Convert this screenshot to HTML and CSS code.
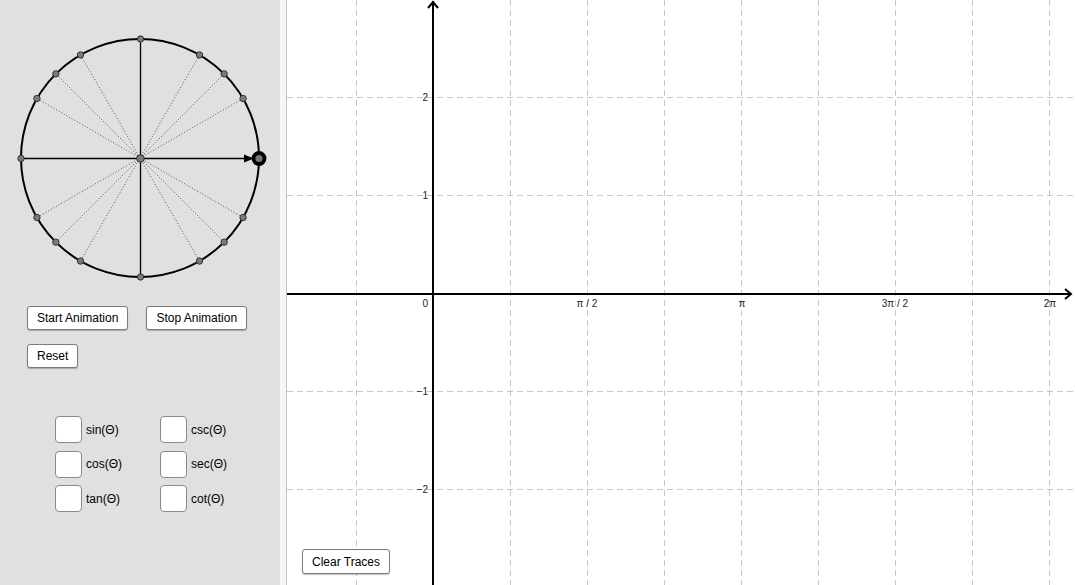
FILE: index.html
```
<!DOCTYPE html>
<html>
<head>
<meta charset="utf-8">
<link rel="stylesheet" href="styles.css">
</head>
<body>
<div class="app">
  <aside class="sidebar">
    <svg class="circle" width="280" height="300" viewBox="0 0 280 300">
      <g class="dots">
        <line x1="140" y1="158" x2="243.06" y2="98.5"/>
        <line x1="140" y1="158" x2="224.15" y2="73.85"/>
        <line x1="140" y1="158" x2="199.5" y2="54.94"/>
        <line x1="140" y1="158" x2="80.5" y2="54.94"/>
        <line x1="140" y1="158" x2="55.85" y2="73.85"/>
        <line x1="140" y1="158" x2="36.94" y2="98.5"/>
        <line x1="140" y1="158" x2="36.94" y2="217.5"/>
        <line x1="140" y1="158" x2="55.85" y2="242.15"/>
        <line x1="140" y1="158" x2="80.5" y2="261.06"/>
        <line x1="140" y1="158" x2="199.5" y2="261.06"/>
        <line x1="140" y1="158" x2="224.15" y2="242.15"/>
        <line x1="140" y1="158" x2="243.06" y2="217.5"/>
      </g>
      <circle cx="140" cy="158" r="119" fill="none" stroke="#000" stroke-width="2"/>
      <line x1="140.5" y1="39" x2="140.5" y2="277" stroke="#000" stroke-width="1.3"/>
      <line x1="21" y1="158.5" x2="140" y2="158.5" stroke="#000" stroke-width="1.3"/>
      <line x1="140" y1="158.5" x2="248" y2="158.5" stroke="#000" stroke-width="1.4"/>
      <polygon points="244,154.5 254,158.5 244,162.5" fill="#000"/>
      <g class="pts">
        <circle cx="243.06" cy="98.5" r="3.2"/>
        <circle cx="224.15" cy="73.85" r="3.2"/>
        <circle cx="199.5" cy="54.94" r="3.2"/>
        <circle cx="140.5" cy="39" r="3.2"/>
        <circle cx="80.5" cy="54.94" r="3.2"/>
        <circle cx="55.85" cy="73.85" r="3.2"/>
        <circle cx="36.94" cy="98.5" r="3.2"/>
        <circle cx="21" cy="158.5" r="3.2"/>
        <circle cx="36.94" cy="217.5" r="3.2"/>
        <circle cx="55.85" cy="242.15" r="3.2"/>
        <circle cx="80.5" cy="261.06" r="3.2"/>
        <circle cx="140.5" cy="277" r="3.2"/>
        <circle cx="199.5" cy="261.06" r="3.2"/>
        <circle cx="224.15" cy="242.15" r="3.2"/>
        <circle cx="243.06" cy="217.5" r="3.2"/>
        <circle cx="140.5" cy="158.5" r="3.8"/>
      </g>
      <circle cx="259" cy="158.5" r="5.5" fill="#777" stroke="#000" stroke-width="3.8"/>
    </svg>

    <div class="controls">
      <div class="btn-row">
        <button class="btn">Start Animation</button>
        <button class="btn">Stop Animation</button>
      </div>
      <div class="btn-row">
        <button class="btn">Reset</button>
      </div>
    </div>

    <div class="checks">
      <label class="check"><span class="box"></span>sin(Θ)</label>
      <label class="check"><span class="box"></span>csc(Θ)</label>
      <label class="check"><span class="box"></span>cos(Θ)</label>
      <label class="check"><span class="box"></span>sec(Θ)</label>
      <label class="check"><span class="box"></span>tan(Θ)</label>
      <label class="check"><span class="box"></span>cot(Θ)</label>
    </div>
  </aside>
  <div class="divider"></div>
  <main class="graph">
    <svg class="plot" width="788" height="585" viewBox="0 0 788 585">
      <g class="grid">
        <line x1="69.5" y1="0" x2="69.5" y2="585"/>
        <line x1="223.5" y1="0" x2="223.5" y2="585"/>
        <line x1="300.5" y1="0" x2="300.5" y2="585"/>
        <line x1="377.5" y1="0" x2="377.5" y2="585"/>
        <line x1="454.5" y1="0" x2="454.5" y2="585"/>
        <line x1="531.5" y1="0" x2="531.5" y2="585"/>
        <line x1="608.5" y1="0" x2="608.5" y2="585"/>
        <line x1="685.5" y1="0" x2="685.5" y2="585"/>
        <line x1="762.5" y1="0" x2="762.5" y2="585"/>
        <line x1="0" y1="97.5" x2="788" y2="97.5"/>
        <line x1="0" y1="195.5" x2="788" y2="195.5"/>
        <line x1="0" y1="391.5" x2="788" y2="391.5"/>
        <line x1="0" y1="489.5" x2="788" y2="489.5"/>
      </g>
      <g class="axes">
        <line x1="146" y1="1" x2="146" y2="585"/>
        <line x1="0" y1="294" x2="784" y2="294"/>
        <polyline points="141,8 146,2 151,8" fill="none"/>
        <polyline points="778,289 784,294 778,299" fill="none"/>
      </g>
      <g class="labels">
        <text x="141" y="307" text-anchor="end">0</text>
        <text x="300" y="307" text-anchor="middle">π / 2</text>
        <text x="455" y="307" text-anchor="middle">π</text>
        <text x="608" y="307" text-anchor="middle">3π / 2</text>
        <text x="763" y="307" text-anchor="middle">2π</text>
        <text x="141" y="101" text-anchor="end">2</text>
        <text x="141" y="199" text-anchor="end">1</text>
        <text x="141" y="395" text-anchor="end">−1</text>
        <text x="141" y="493" text-anchor="end">−2</text>
      </g>
    </svg>
    <button class="btn clear">Clear Traces</button>
  </main>
</div>
</body>
</html>
```

FILE: styles.css
```
html, body {
  margin: 0;
  padding: 0;
  width: 1075px;
  height: 585px;
  overflow: hidden;
  background: #fff;
  font-family: "Liberation Sans", Arial, sans-serif;
}

.app {
  display: flex;
  width: 1075px;
  height: 585px;
}

.sidebar {
  width: 280px;
  flex: none;
  background: #e0e0e0;
  display: flex;
  flex-direction: column;
}

.circle {
  display: block;
}

.dots line {
  stroke: #555;
  stroke-width: 1;
  stroke-dasharray: 1 2;
}

.pts circle {
  fill: #7a7a7a;
  stroke: #2a2a2a;
  stroke-width: 0.9;
}

.controls {
  margin-top: 6px;
  padding-left: 27px;
  display: flex;
  flex-direction: column;
  gap: 14px;
}

.btn-row {
  display: flex;
  gap: 18px;
}

.btn {
  height: 24px;
  padding: 0 9px;
  background: #fff;
  border: 1px solid #7c7c7c;
  border-radius: 3px;
  box-shadow: 0 1px 1px rgba(0, 0, 0, 0.25);
  font-family: "Liberation Sans", Arial, sans-serif;
  font-size: 12px;
  color: #000;
  line-height: 22px;
  cursor: pointer;
}

.checks {
  margin-top: 48px;
  padding-left: 55px;
  display: grid;
  grid-template-columns: 105px 105px;
  row-gap: 7.5px;
}

.check {
  display: flex;
  align-items: center;
  gap: 4px;
  font-size: 12px;
  color: #000;
  height: 27px;
}

.box {
  width: 25px;
  height: 25px;
  background: #fff;
  border: 1px solid #8a8a8a;
  border-radius: 4px;
  flex: none;
}

.divider {
  width: 6px;
  flex: none;
  background: #f6f6f6;
  border-right: 1px solid #c4c4c4;
}

.graph {
  position: relative;
  flex: 1;
  background: #fff;
}

.plot {
  display: block;
}

.grid line {
  stroke: #c8c8c8;
  stroke-width: 1;
  stroke-dasharray: 6 4;
}

.axes line,
.axes polyline {
  stroke: #000;
  stroke-width: 2;
}

.labels text {
  font-family: "Liberation Sans", Arial, sans-serif;
  font-size: 10px;
  fill: #222;
}

.clear {
  position: absolute;
  left: 15px;
  top: 549px;
  height: 25px;
}
```
